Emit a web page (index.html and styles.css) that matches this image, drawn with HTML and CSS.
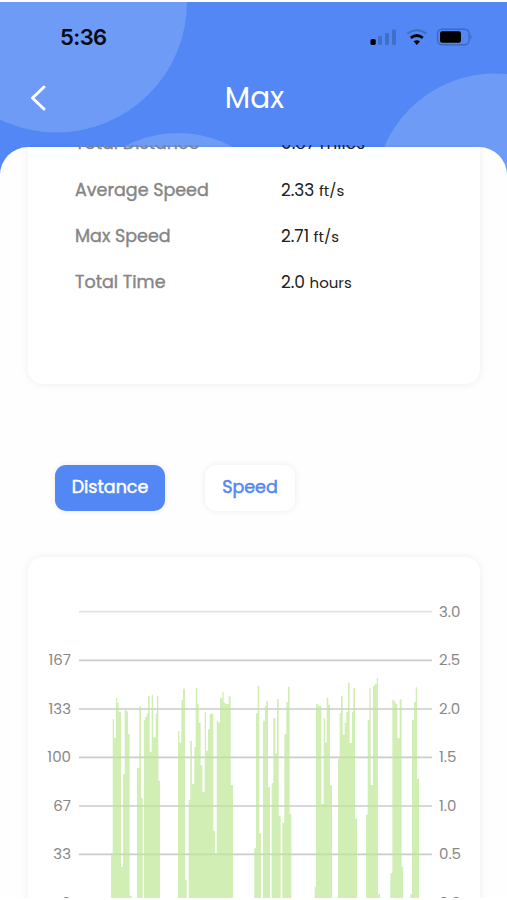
FILE: index.html
```html
<!DOCTYPE html>
<html lang="en">
<head>
    <meta charset="UTF-8">
    <meta name="viewport" content="width=device-width, initial-scale=1.0">
    <title>Max</title>
    <link rel="stylesheet" href="styles.css">
</head>
<body>
    <div class="screen">
        <svg class="bubbles" width="507" height="200" viewBox="0 2 507 200">
            <circle cx="56.500" cy="2" r="130.500"/>
            <circle cx="178" cy="248" r="115"/>
            <circle cx="495" cy="194" r="120.500"/>
        </svg>
        <header class="header">
            <div class="status-bar">
                <span class="clock">5:36</span>
                <svg class="status-icons" width="103" height="18" viewBox="0 0 103 18">
                    <rect x="0.500" y="11" width="5.200" height="6" rx="1.500"/>
                    <g fill="#426fc6">
                        <rect x="8" y="8" width="4" height="9" rx="1"/>
                        <rect x="15" y="5" width="4" height="12" rx="1"/>
                        <rect x="22" y="1.500" width="4" height="15.500" rx="1"/>
                    </g>
                    <g fill="none">
                        <path d="M37.300 5.600Q46.800 -1.200 56.300 5.600" stroke="#426fc6" stroke-width="2.200"/>
                        <path d="M40.800 9.900Q46.800 5.200 52.800 9.900" stroke="#000" stroke-width="2.800"/>
                    </g>
                    <path d="M43.600 13.200Q46.800 11.200 50 13.200L46.800 17Z"/>
                    <rect x="67.600" y="1.300" width="31.500" height="15.400" rx="4.500" fill="none" stroke="#3e69bd" stroke-width="1.400"/>
                    <rect x="70" y="3.300" width="21" height="11.400" rx="2.200"/>
                    <path d="M100.500 6.500Q102.500 9 100.500 11.500Z" fill="#3562b6"/>
                </svg>
            </div>
            <div class="title-bar">
                <svg class="back" width="18" height="28" viewBox="0 0 18 28">
                    <path d="M15 3L3.500 14L15 25"/>
                </svg>
                <h1 class="title">Max</h1>
            </div>
        </header>
        <main class="sheet">
            <section class="card stats">
                <div class="stat"><span class="label">Total Distance</span><span class="value">0.87 miles</span></div>
                <div class="stat"><span class="label">Average Speed</span><span class="value">2.33 <small>ft/s</small></span></div>
                <div class="stat"><span class="label">Max Speed</span><span class="value">2.71 <small>ft/s</small></span></div>
                <div class="stat"><span class="label">Total Time</span><span class="value">2.0 <small>hours</small></span></div>
            </section>
            <div class="tabs">
                <button class="tab active">Distance</button>
                <button class="tab">Speed</button>
            </div>
            <section class="card chart">
                <div class="axis axis-left">
                    <span></span><span>167</span><span>133</span><span>100</span><span>67</span><span>33</span><span>0</span>
                </div>
                <svg class="plot" width="353" height="341" viewBox="153 0 1059 1023">
                    <path class="grid top" d="M153 164H1212"/>
                    <path class="grid" d="M153 310H1212M153 456H1212M153 601H1212M153 747H1212M153 892H1212"/>
                    <g class="bars">
                        <path transform="translate(36 339)" d="M213 684V549H218V147H222V203H228V84H232V98H236V125H243V590H249V313H254V120H259V124H264V192H269V677H275V684ZM291 684V294H298V109H303V384H308V684ZM312 684V150H316V140H320V130H324V78H329V246H335V74H339V202H347V130H351V78H355V332H360V684Z"/>
                        <path transform="translate(411 339)" d="M39 684V184H43V218H49V90H54V56H60V630H65V684ZM71 684V390H76V213H81V342H88V232H92V54H97V102H101V158H107V286H112V366H119V126H123V242H129V178H134V131H145V483H150V549H155V152H160V158H165V85H172V67H176V98H181V102H191V79H197V345H204V684Z"/>
                        <path transform="translate(411 339)" d="M268 684V534H273V130H278V48H283V490H288V684ZM294 684V152H300V107H304V92H309V352H315V684ZM320 684V340H325V144H331V250H336V87H341V437H347V684ZM352 684V458H358V192H364V97H369V50H374V432H379V684Z"/>
                        <path transform="translate(786 339)" d="M74 684V650H78V102H84V107H94V402H101V145H105V218H110V83H115V104H120V346H126V684ZM144 684V266H149V130H153V78H158V194H164V158H169V126H174V38H179V219H186V126H190V55H195V446H201V684ZM228 684V434H233V150H238V55H242V345H249V48H254V42H260V24H264V672H270V684Z"/>
                        <path transform="translate(1056 99)" d="M31 924V850H37V330H43V335H47V342H52V444H59V328H65V830H69V924ZM91 924V912H96V390H102V336H107V292H111V566H117V924Z"/>
                    </g>
                </svg>
                <div class="axis axis-right">
                    <span>3.0</span><span>2.5</span><span>2.0</span><span>1.5</span><span>1.0</span><span>0.5</span><span>0.0</span>
                </div>
            </section>
        </main>
    </div>
</body>
</html>
```
FILE: styles.css
```css
* {
    box-sizing: border-box;
}
body {
    margin: 0;
    background: #fff;
    font-family: Poppins, Inter, sans-serif;
    overflow: hidden;
}
.screen {
    position: relative;
    display: flex;
    flex-direction: column;
    width: 507px;
    height: 896px;
    margin: 2px 0;
    background: #5287f5;
    overflow: hidden;
}
.bubbles {
    position: absolute;
    top: 0;
    left: 0;
    fill: #6d9bf5;
}
.header {
    position: relative;
    height: 143px;
    flex: none;
}
.status-bar {
    display: flex;
    justify-content: space-between;
    align-items: center;
    height: 69px;
    padding: 0 34px 0 60px;
}
.clock {
    font: 600 22px Inter, sans-serif;
    letter-spacing: -0.6px;
    color: #050b18;
}
.title-bar {
    display: flex;
    align-items: center;
    height: 54px;
    padding-left: 29px;
}
.back {
    fill: none;
    stroke: #fff;
    stroke-width: 3;
    stroke-linecap: round;
    stroke-linejoin: round;
}
.title {
    flex: 1;
    margin: 0 45px 0 0;
    text-align: center;
    font-size: 29.5px;
    font-weight: 400;
    color: #fff;
}
.sheet {
    position: relative;
    flex: 1;
    min-height: 0;
    padding: 0 27px 0 28px;
    overflow: hidden;
}
.sheet::before {
    content: '';
    position: absolute;
    inset: 2px 0 0;
    background: #fefefe;
    border-radius: 28px 28px 0 0;
}
.card {
    position: relative;
    background: #fff;
    box-shadow: 0 0 10px rgba(0, 0, 0, 0.065);
}
/* scrolled under the header, so only its lower part shows */
.stats {
    display: flex;
    flex-direction: column;
    height: 237px;
    top: 2px;
    padding: 0 47px;
    border-radius: 0 0 15px 15px;
    clip-path: inset(-2px -20px -20px);
}
.stat {
    display: flex;
    flex: none;
    align-items: center;
    height: 46.4px;
    font-size: 17px;
    color: #222;
}
.stat:first-child {
    margin-top: -27px;
}
.label {
    width: 206px;
    font-size: 17.5px;
    color: #858585;
    -webkit-text-stroke: 0.4px #858585;
}
.value small {
    font-size: 15px;
}
.tabs {
    position: relative;
    display: flex;
    gap: 40px;
    margin: 83px 0 46px 27px;
}
.tab {
    width: 90px;
    height: 46px;
    padding: 0 0 3px;
    border: none;
    border-radius: 11px;
    background: #fff;
    color: #5287f5;
    font: 400 17.5px Poppins, Inter, sans-serif;
    -webkit-text-stroke: 0.5px;
    box-shadow: 0 0 6px rgba(0, 0, 0, 0.08);
}
.tab.active {
    width: 110px;
    background: #5287f5;
    color: #fff;
}
.chart {
    display: flex;
    height: 360px;
    border-radius: 15px 15px 0 0;
}
.plot {
    flex: none;
}
.axis {
    display: flex;
    flex-direction: column;
    padding-top: 30.5px;
    font-size: 15px;
    color: #888;
}
.axis span {
    flex: none;
    height: 48.6px;
    line-height: 48.6px;
}
.axis-left {
    width: 51px;
    padding-right: 8px;
    text-align: right;
}
.axis-right {
    padding-left: 7px;
}
.grid {
    stroke: #ccc;
    stroke-width: 5;
}
.grid.top {
    stroke: #e3e3e3;
}
.bars {
    fill: #bde794;
    fill-opacity: 0.7;
}
```
